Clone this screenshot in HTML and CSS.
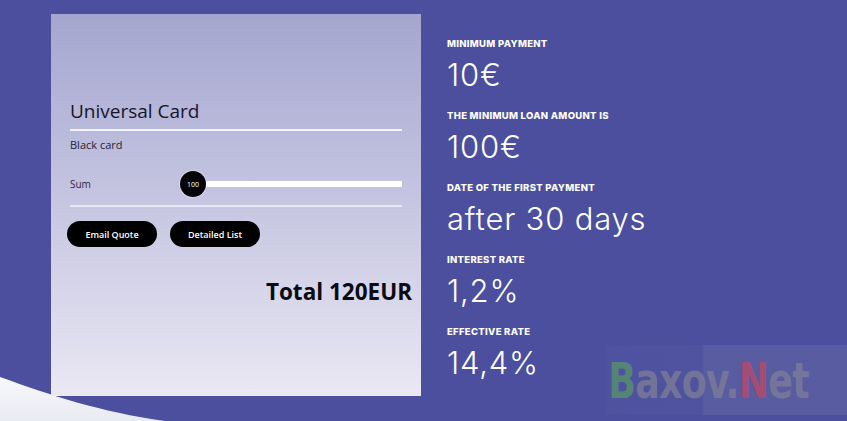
FILE: index.html
```html
<!DOCTYPE html>
<html>
<head>
<meta charset="utf-8">
<link rel="stylesheet" href="styles.css">
</head>
<body>
<svg class="wave" width="200" height="60" viewBox="0 0 200 60">
  <defs>
    <linearGradient id="wg" x1="0" y1="0" x2="0" y2="1">
      <stop offset="0" stop-color="#f7f8fb"/>
      <stop offset="1" stop-color="#e9ebf2"/>
    </linearGradient>
  </defs>
  <path d="M0 16 C50 34 100 51 165 60 L0 60 Z" fill="url(#wg)"/>
</svg>
<div class="page">
  <section class="card">
    <h1 class="title">Universal Card</h1>
    <div class="rule"></div>
    <div class="sub">Black card</div>
    <div class="sum-row">
      <span class="sum-label">Sum</span>
      <div class="slider">
        <div class="knob">100</div>
        <div class="track"></div>
      </div>
    </div>
    <div class="rule rule-light"></div>
    <div class="buttons">
      <button class="btn">Email Quote</button>
      <button class="btn">Detailed List</button>
    </div>
    <div class="total">Total 120EUR</div>
  </section>
  <section class="info">
    <div class="item"><div class="label">MINIMUM PAYMENT</div><div class="value">10€</div></div>
    <div class="item"><div class="label">THE MINIMUM LOAN AMOUNT IS</div><div class="value">100€</div></div>
    <div class="item"><div class="label">DATE OF THE FIRST PAYMENT</div><div class="value">after 30 days</div></div>
    <div class="item"><div class="label">INTEREST RATE</div><div class="value">1,2%</div></div>
    <div class="item"><div class="label">EFFECTIVE RATE</div><div class="value">14,4%</div></div>
  </section>
</div>
<div class="watermark"><div class="wm-text"><span class="wm-g">B</span>axov.<span class="wm-r">N</span>et</div></div>
</body>
</html>
```

FILE: styles.css
```css
html, body {
  margin: 0;
  padding: 0;
}
body {
  width: 847px;
  height: 421px;
  overflow: hidden;
  background: #4b4f9e;
  position: relative;
  font-family: "Open Sans", sans-serif;
}
.wave {
  position: absolute;
  left: 0;
  bottom: 0;
}
.page {
  position: relative;
  display: flex;
  padding: 14px 0 0 51px;
}
.card {
  width: 370px;
  height: 382px;
  box-sizing: border-box;
  padding: 84px 19px 0 19px;
  background: linear-gradient(180deg, #a4a6cf 0%, #c3c3e0 45%, #eae8f3 100%);
  display: flex;
  flex-direction: column;
}
.title {
  margin: 0;
  font-weight: 400;
  font-size: 19px;
  line-height: 26px;
  color: #15152a;
}
.rule {
  height: 2px;
  background: #f4f4fb;
  margin-top: 5px;
}
.rule-light {
  height: 2px;
  background: #e6e6f4;
  margin-top: 8px;
}
.sub {
  margin-top: 6px;
  font-size: 11px;
  line-height: 16px;
  color: #222238;
}
.sum-row {
  display: flex;
  align-items: center;
  margin-top: 18px;
}
.sum-label {
  width: 110px;
  font-size: 10px;
  color: #2a2a44;
}
.slider {
  flex: 1;
  display: flex;
  align-items: center;
}
.knob {
  width: 26px;
  height: 26px;
  border-radius: 50%;
  background: #050508;
  color: #fff;
  font-size: 7px;
  display: flex;
  align-items: center;
  justify-content: center;
  flex: none;
  box-shadow: 0 0 0 1px rgba(255, 255, 255, 0.35);
}
.track {
  flex: 1;
  height: 6px;
  background: #ffffff;
  border-radius: 1px;
}
.buttons {
  display: flex;
  gap: 13px;
  margin-top: 14px;
  margin-left: -3px;
}
.btn {
  width: 90px;
  height: 26px;
  border: none;
  border-radius: 13px;
  background: #000;
  color: #fff;
  font-family: "Open Sans", sans-serif;
  font-size: 9px;
  font-weight: 600;
  padding: 0;
}
.total {
  align-self: flex-end;
  margin-right: -10px;
  margin-top: 29px;
  font-size: 22.5px;
  font-weight: 700;
  color: #0b0b14;
}
.info {
  margin-left: 26px;
  padding-top: 24px;
  color: #fff;
}
.item {
  height: 72px;
}
.label {
  font-family: Inter, sans-serif;
  font-weight: 800;
  font-size: 9.5px;
  line-height: 12px;
  letter-spacing: 0.3px;
}
.value {
  font-family: Inter, sans-serif;
  font-weight: 300;
  font-size: 31px;
  line-height: 40px;
  margin-top: 5px;
  letter-spacing: 0.8px;
}
.watermark {
  position: absolute;
  left: 605px;
  top: 345px;
  width: 242px;
  height: 70px;
  background: linear-gradient(90deg, rgba(140, 140, 180, 0.04) 0%, rgba(140, 140, 180, 0.06) 40%, rgba(150, 150, 170, 0.18) 41%, rgba(150, 150, 170, 0.18) 100%);
}
.wm-text {
  padding-left: 4px;
  margin-top: 11px;
  font-family: "DejaVu Sans Condensed", "DejaVu Sans", sans-serif;
  font-weight: 700;
  font-size: 50px;
  line-height: 50px;
  letter-spacing: -1px;
  color: rgba(125, 125, 150, 0.8);
  transform: scaleX(0.81);
  transform-origin: left center;
  white-space: nowrap;
}
.wm-g { color: rgba(85, 140, 110, 0.9); }
.wm-r { color: rgba(175, 75, 110, 0.9); }
```
